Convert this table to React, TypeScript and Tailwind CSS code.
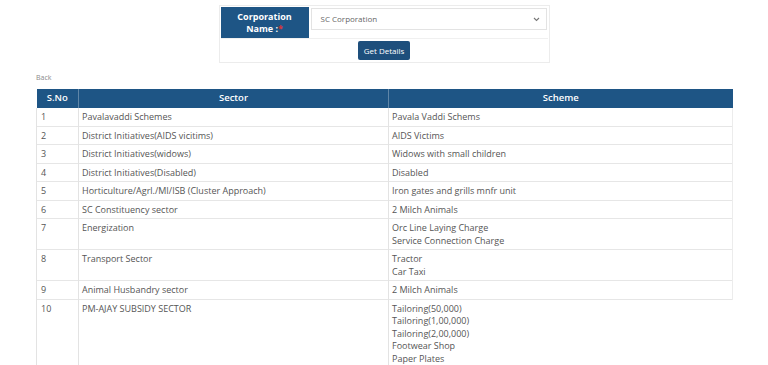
import React from 'react';

type Row = { no: number; sector: string; schemes: string[] };

const ROWS: Row[] = [
  { no: 1, sector: 'Pavalavaddi Schemes', schemes: ['Pavala Vaddi Schems'] },
  { no: 2, sector: 'District Initiatives(AIDS vicitims)', schemes: ['AIDS Victims'] },
  { no: 3, sector: 'District Initiatives(widows)', schemes: ['Widows with small children'] },
  { no: 4, sector: 'District Initiatives(Disabled)', schemes: ['Disabled'] },
  { no: 5, sector: 'Horticulture/Agrl./MI/ISB (Cluster Approach)', schemes: ['Iron gates and grills mnfr unit'] },
  { no: 6, sector: 'SC Constituency sector', schemes: ['2 Milch Animals'] },
  { no: 7, sector: 'Energization', schemes: ['Orc Line Laying Charge', 'Service Connection Charge'] },
  { no: 8, sector: 'Transport Sector', schemes: ['Tractor', 'Car Taxi'] },
  { no: 9, sector: 'Animal Husbandry sector', schemes: ['2 Milch Animals'] },
  {
    no: 10,
    sector: 'PM-AJAY SUBSIDY SECTOR',
    schemes: ['Tailoring(50,000)', 'Tailoring(1,00,000)', 'Tailoring(2,00,000)', 'Footwear Shop', 'Paper Plates'],
  },
];

export default function App() {
  return (
    <div
      className="h-[365px] w-[768px] overflow-hidden bg-white text-[#555]"
      style={{ fontFamily: '"Open Sans", "Noto Sans", sans-serif' }}
    >
      {/* Search form */}
      <div className="flex justify-center pt-[5px]">
        <div className="w-[331px] border border-[#ececec] p-[1px]">
          <div className="flex gap-[2px]">
            <div className="flex h-[31px] w-[88px] flex-col items-center justify-center bg-[#1e5585] text-[9px] font-bold leading-[11.5px] text-white">
              <span>Corporation</span>
              <span>
                Name :<span className="text-[#d33]">*</span>
              </span>
            </div>
            <div className="flex-1 pt-[1px] pr-[1px]">
              <div className="flex h-[22px] items-center justify-between border border-[#e3e3e3] pl-[9px] pr-[6px] text-[8px] text-[#666]">
                <span>SC Corporation</span>
                <svg width="7" height="5" viewBox="0 0 7 5" fill="none">
                  <path d="M1 1l2.5 2.5L6 1" stroke="#777" strokeWidth="1.1" />
                </svg>
              </div>
            </div>
          </div>
          <div className="flex justify-center border-t border-[#f0f0f0] pt-[2px] pb-[1px]">
            <button className="h-[19px] rounded-[2px] bg-[#1e4f7c] px-[6px] text-[8px] text-white">
              Get Details
            </button>
          </div>
        </div>
      </div>

      <div className="pl-[36px] pt-[10px] text-[7px] leading-[9px] text-[#8a8a8a]">Back</div>

      {/* Results */}
      <div className="pl-[36px] pt-[7px]">
        <table className="w-[696px] table-fixed border-collapse text-[9px] leading-[12.5px]">
          <colgroup>
            <col className="w-[42px]" />
            <col className="w-[310px]" />
            <col className="w-[344px]" />
          </colgroup>
          <thead>
            <tr className="bg-[#1e5585] text-white">
              <th className="h-[19px] border-r border-[#5f86a8] p-0 text-[9.5px] font-semibold">S.No</th>
              <th className="border-r border-[#5f86a8] p-0 text-[9.5px] font-semibold">Sector</th>
              <th className="p-0 text-[9.5px] font-semibold">Scheme</th>
            </tr>
          </thead>
          <tbody>
            {ROWS.map((r, i) => (
              <tr key={r.no} className="border-b border-[#e6e6e6] align-top">
                <td className="border-l border-r border-[#e3e3e3] px-[4px] pt-[3px] pb-[2px]">{r.no}</td>
                <td className="border-r border-[#e3e3e3] px-[3px] pt-[3px] pb-[2px]">{r.sector}</td>
                <td
                  className={
                    i === ROWS.length - 1
                      ? 'border-r border-white px-[3px] pt-[3px] pb-[2px]'
                      : 'border-r border-[#ececec] px-[3px] pt-[3px] pb-[2px]'
                  }
                >
                  {r.schemes.map((s) => (
                    <div key={s}>{s}</div>
                  ))}
                </td>
              </tr>
            ))}
          </tbody>
        </table>
      </div>
    </div>
  );
}
